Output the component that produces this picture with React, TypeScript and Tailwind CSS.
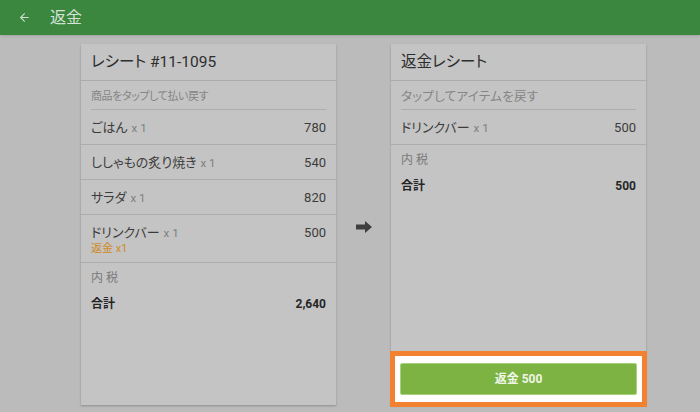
import { ArrowLeft } from "lucide-react";

const font = { fontFamily: '"Roboto", "Noto Sans CJK JP", sans-serif' };

const items = [
  { name: "ごはん", qty: 1, price: "780" },
  { name: "ししゃもの炙り焼き", qty: 1, price: "540" },
  { name: "サラダ", qty: 1, price: "820" },
  { name: "ドリンクバー", qty: 1, price: "500", refund: 1 },
];

function Row({ name, qty, price, refund }: { name: string; qty: number; price: string; refund?: number }) {
  return (
    <div className="flex justify-between border-b border-[#adadad] px-[10px] pt-[9px] pb-[7px] text-[13px] leading-[17px] text-[#3c3c3c]">
      <div>
        <div>
          {name}
          <span className="ml-[4px] text-[11.5px] text-[#7e7e7e]">x {qty}</span>
        </div>
        {refund ? <div className="text-[11px] leading-[13px] text-[#d08a1e]">返金 x{refund}</div> : null}
      </div>
      <div>{price}</div>
    </div>
  );
}

function Totals({ total }: { total: string }) {
  return (
    <div className="px-[10px] pt-[7px]">
      <div className="text-[12px] leading-[16px] text-[#7a7a7a]">内 税</div>
      <div className="mt-[10px] flex justify-between text-[12px] font-bold leading-[16px] text-[#262626]">
        <span>合計</span>
        <span>{total}</span>
      </div>
    </div>
  );
}

function CardHead({ title, hint, hintClass }: { title: string; hint: string; hintClass: string }) {
  return (
    <>
      <div className="border-b border-[#acacac] px-[10px] pt-[9px] pb-[9px] text-[15.5px] leading-[18px] text-[#2e2e2e]">
        {title}
      </div>
      <div className={"mx-[10px] border-b border-[#adadad] pt-[8px] pb-[5px] leading-[15px] text-[#858585] " + hintClass}>
        {hint}
      </div>
    </>
  );
}

export default function App() {
  return (
    <div style={font} className="flex h-[412px] w-[700px] flex-col bg-[#bbbbbb] [font-feature-settings:'palt']">
      <header className="flex h-[35px] items-center bg-[#3b873f] shadow-sm">
        <ArrowLeft size={13} strokeWidth={2} className="ml-[18px] text-[#cfdccf]" />
        <span className="ml-[19px] text-[16px] text-[#d6e2d6]">返金</span>
      </header>

      <div className="flex flex-1 pl-[81px] pt-[9px]">
        <div className="flex h-[361px] w-[255px] flex-col bg-[#c4c4c4] shadow-[0_1px_2px_rgba(0,0,0,0.25)]">
          <CardHead title="レシート #11-1095" hint="商品をタップして払い戻す" hintClass="text-[11px] tracking-[-0.4px]" />
          {items.map((it) => (
            <Row key={it.name} {...it} />
          ))}
          <Totals total="2,640" />
        </div>

        <div className="flex w-[55px] items-center justify-center">
          <svg width="16" height="12" viewBox="0 0 16 12" className="-mt-[2px] mr-[-1px]">
            <path d="M0 3.5h9V0l7 6-7 6V8.5H0z" fill="#3e3e3e" />
          </svg>
        </div>

        <div className="flex h-[361px] w-[255px] flex-col bg-[#c4c4c4] shadow-[0_1px_2px_rgba(0,0,0,0.25)]">
          <CardHead title="返金レシート" hint="タップしてアイテムを戻す" hintClass="text-[12.5px] tracking-[0.3px]" />
          <Row name="ドリンクバー" qty={1} price="500" />
          <Totals total="500" />
          <div className="-mx-px mt-auto -mb-[2px] border-[5px] border-[#f28130] bg-white px-[5px] py-[7px]">
            <button className="flex h-[32px] w-full items-center justify-center rounded-[2px] border border-[#a8d27a] bg-[#7cb342] text-[12px] font-bold text-[#eef6e6]">
              返金 500
            </button>
          </div>
        </div>
      </div>
    </div>
  );
}
